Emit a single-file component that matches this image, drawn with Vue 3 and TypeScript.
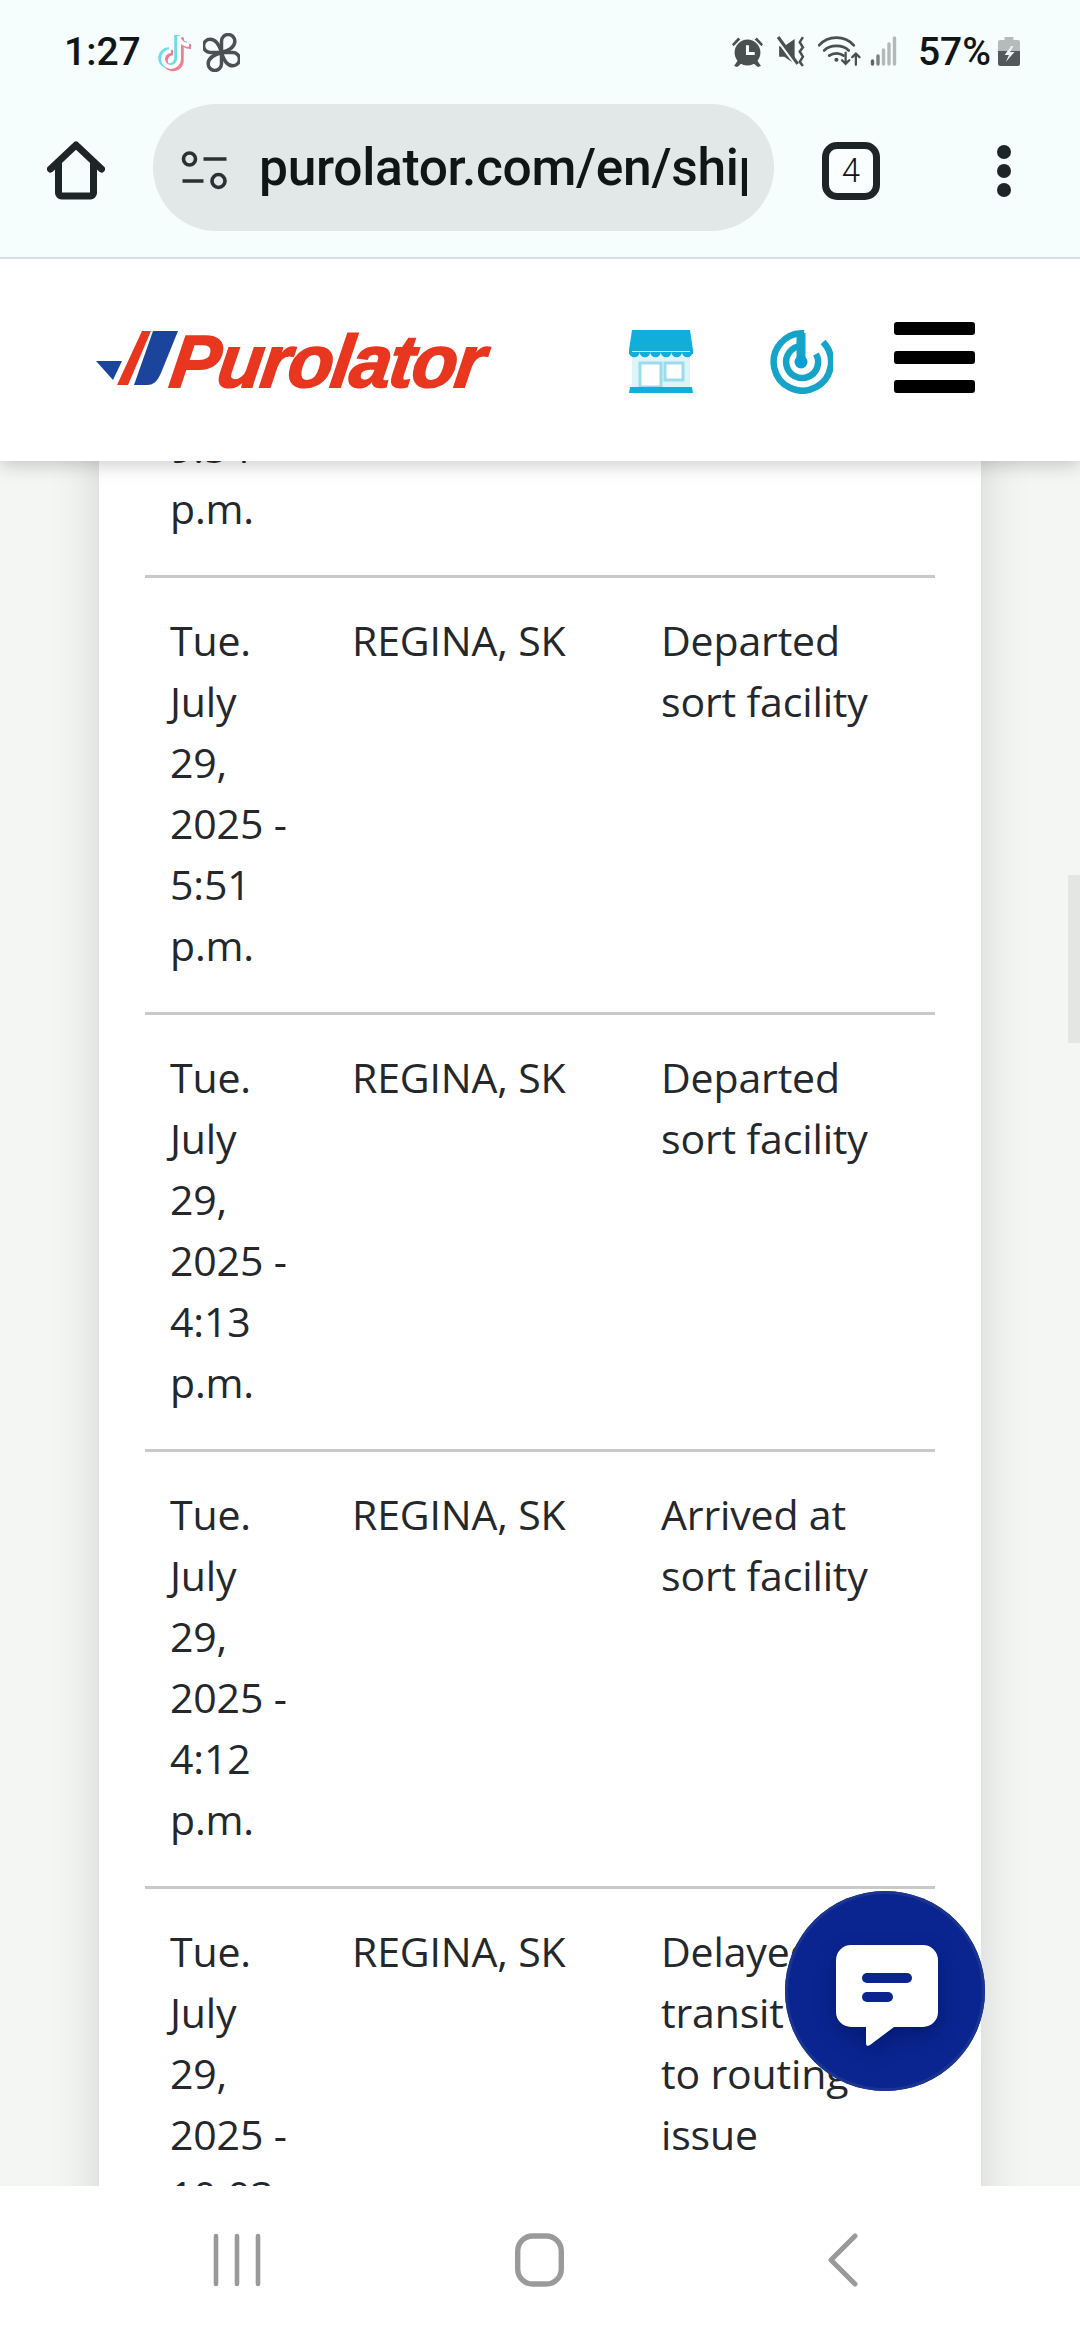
<script setup lang="ts">
interface Scan {
  date: string
  place: string
  status: string
}

const scans: Scan[] = [
  { date: 'Tue. July 29, 2025 - 9:54 p.m.', place: 'REGINA, SK', status: 'Departed sort facility' },
  { date: 'Tue. July 29, 2025 - 5:51 p.m.', place: 'REGINA, SK', status: 'Departed sort facility' },
  { date: 'Tue. July 29, 2025 - 4:13 p.m.', place: 'REGINA, SK', status: 'Departed sort facility' },
  { date: 'Tue. July 29, 2025 - 4:12 p.m.', place: 'REGINA, SK', status: 'Arrived at sort facility' },
  { date: 'Tue. July 29, 2025 - 10:03 a.m.', place: 'REGINA, SK', status: 'Delayed in transit due to routing issue' }
]
</script>

<template>
  <div class="phone">
    <header class="chrome">
      <div class="status">
        <span class="clock">1:27</span>
        <svg class="ic-tiktok" viewBox="0 0 35 40" width="35" height="40" fill="none" stroke-width="5.500">
          <g stroke="#6fdde6" transform="translate(-2 -1)">
            <path d="M21 4V27a8 8 0 1 1-8-8" />
            <path d="M21 4c0 5 4 9 10 9" stroke-width="5" />
          </g>
          <g stroke="#ea7f95" transform="translate(2 1.500)">
            <path d="M21 4V27a8 8 0 1 1-8-8" />
            <path d="M21 4c0 5 4 9 10 9" stroke-width="5" />
          </g>
          <g stroke="#fbfdfd">
            <path d="M21 4V27a8 8 0 1 1-8-8" stroke-width="4" />
            <path d="M21 4c0 5 4 9 10 9" stroke-width="3.500" />
          </g>
        </svg>
        <svg class="ic-pin" viewBox="0 0 36 38" width="37" height="39" fill="none" stroke="#4a5152" stroke-width="3.400" stroke-linejoin="round">
          <g v-for="a in [0, 90, 180, 270]" :key="a" :transform="`rotate(${a} 18 19)`">
            <path d="M18 19V8a6.500 6.500 0 0 1 13 0c0 6-6 9-13 11Z" />
          </g>
        </svg>
        <span class="spacer"></span>
        <svg class="ic-alarm" viewBox="0 0 30 30" width="31" height="31">
          <circle cx="15" cy="16" r="12.500" fill="#4a4f50" />
          <path d="M0 8l6-6.500 2 2-6.500 6.500ZM30 8l-6-6.500-2 2 6.500 6.500ZM6 23l-4 6 3 1 5-4ZM24 23l4 6-3 1-5-4Z" fill="#4a4f50" />
          <path d="M15 9v8h7" fill="none" stroke="#fbffff" stroke-width="3" />
        </svg>
        <svg class="ic-mute" viewBox="1 0 27 30" width="30" height="31">
          <path d="M3 10h5L18 3v24L8 20H3Z" fill="#4a4f50" />
          <path d="M1 2l19 26" stroke="#f5fdfd" stroke-width="4" />
          <path d="M2 1l19 26" stroke="#4a4f50" stroke-width="3" />
          <path d="M26 1l-3 5 3 5-3 4 3 5-3 5 3 4" fill="none" stroke="#4a4f50" stroke-width="2.400" />
        </svg>
        <svg class="ic-wifi" viewBox="0 0 42 32" width="43" height="33" fill="none" stroke="#4a4f50" stroke-width="2.600" stroke-linecap="round">
          <path d="M1 11c9-10 25-10 34 0" />
          <path d="M6 16c6-6 18-6 24 0" />
          <path d="M11 21c4-3 10-3 14 0" />
          <circle cx="18" cy="25" r="2" fill="#4a4f50" stroke="none" />
          <path d="M27 18v11m-3.500-3.500 3.500 3.500 3.500-3.500M37 30V19m-3.500 3.500 3.500-3.500 3.500 3.500" stroke-width="2.200" />
        </svg>
        <svg class="ic-signal" viewBox="0 0 26 30" width="27" height="30" stroke-width="3.400" stroke-linecap="round">
          <path d="M2 28v-3" stroke="#5e6364" />
          <path d="M7.500 28v-8" stroke="#7c8182" />
          <path d="M13 28V14M18.500 28V8M24 28V2" stroke="#b4b8b8" />
        </svg>
        <span class="pct">57%</span>
        <svg class="ic-batt" viewBox="0 0 20 29" width="22" height="29" preserveAspectRatio="none">
          <path d="M6 0h8v3h4a2 2 0 0 1 2 2v9H0V5a2 2 0 0 1 2-2h4Z" fill="#b6baba" />
          <path d="M0 14h20v13a2 2 0 0 1-2 2H2a2 2 0 0 1-2-2Z" fill="#53585a" />
          <path d="M12 9l-6 9h4l-3 7 8-10h-4l3-6Z" fill="#eef3f3" />
        </svg>
      </div>
      <div class="urlrow">
        <svg class="ic-home" viewBox="0 0 58 59" width="58" height="59" fill="none" stroke="#1e2526" stroke-width="7" stroke-linecap="round" stroke-linejoin="round">
          <path d="M3.500 28 29 4l25.500 24" />
          <path d="M11.500 22v30a3 3 0 0 0 3 3h29a3 3 0 0 0 3-3V22" />
        </svg>
        <div class="pill">
          <svg class="ic-tune" viewBox="0 0 46 40" width="47" height="40" fill="none" stroke="#2a3132" stroke-width="3.600">
            <circle cx="8" cy="8" r="6" />
            <path d="M22 8h23M1 30h21" />
            <circle cx="37" cy="30" r="6.500" />
          </svg>
          <span class="url">purolator.com/en/ship</span>
        </div>
        <div class="tabs">4</div>
        <div class="dots"><i></i><i></i><i></i></div>
      </div>
    </header>

    <div class="site">
      <svg class="logo-mark" viewBox="0 0 82 54" width="82" height="54">
        <path d="M0 30h26l-9 19Z" fill="#1b459c" />
        <path d="M46 0h9L32 54H21Z" fill="#e8361f" />
        <path d="M57 0h25L65 42c-4 9-8 12-14 12H38Z" fill="#1b459c" />
      </svg>
      <span class="logo-word">Purolator</span>
      <svg class="ic-store" viewBox="0 0 64 63" width="64" height="63">
        <path d="M3 0h58l3 20v4H0v-4Z" fill="#12aedb" />
        <path d="M3 21h58v36H3Z" fill="#dff4fa" />
        <path d="M0 22a5.300 5.300 0 0 0 10.600 0 5.300 5.300 0 0 0 10.600 0 5.300 5.300 0 0 0 10.600 0 5.300 5.300 0 0 0 10.600 0 5.300 5.300 0 0 0 10.600 0 5.300 5.300 0 0 0 10.600 0Z" fill="#12aedb" />
        <path d="M11 33h21v24H11ZM36 33h18v17H36Z" fill="#fff" stroke="#9adcee" stroke-width="3" />
        <path d="M1 57h62l1 6H0Z" fill="#12aedb" />
      </svg>
      <svg class="ic-radar" viewBox="0 0 64 64" width="64" height="64" fill="none" stroke="#15a3c7" stroke-width="6.500">
        <path d="M35 3.300A28.700 28.700 0 1 0 54 12" />
        <path d="M32 16A16 16 0 1 0 47 24" />
        <path d="M32 3V32" stroke-width="9" />
        <circle cx="32" cy="32" r="6.500" fill="#0b9fd8" stroke="none" />
      </svg>
      <div class="burger"><i></i><i></i><i></i></div>
    </div>

    <main class="page">
      <section class="card">
        <div v-for="(s, i) in scans" :key="i" class="row">
          <div class="cell date">{{ s.date }}</div>
          <div class="cell place">{{ s.place }}</div>
          <div class="cell state">{{ s.status }}</div>
        </div>
      </section>
    </main>

    <nav class="navbar">
      <svg class="nav-recent" viewBox="0 0 48 54" width="48" height="54" stroke="#9a9a9a" stroke-width="4.600" stroke-linecap="round">
        <path d="M3 3v48M24 3v48M45 3v48" />
      </svg>
      <svg class="nav-home" viewBox="0 0 49 54" width="49" height="54" fill="none" stroke="#9a9a9a" stroke-width="5.400">
        <rect x="2.700" y="3" width="43.600" height="48" rx="15" />
      </svg>
      <svg class="nav-back" viewBox="0 0 30 54" width="30" height="54" fill="none" stroke="#9a9a9a" stroke-width="5" stroke-linecap="round" stroke-linejoin="round">
        <path d="M27 3 3 27l24 24" />
      </svg>
    </nav>

    <div class="thumb"></div>

    <button class="fab" type="button" aria-label="Chat">
      <svg viewBox="0 0 200 200" width="200" height="200">
        <path class="bubble" d="M66 54h72a15 15 0 0 1 15 15v52a15 15 0 0 1-15 15h-29l-24 18c-2 1.500-4 1-4-2v-16H66a15 15 0 0 1-15-15V69a15 15 0 0 1 15-15Z" fill="#fff" />
        <rect x="77" y="82" width="50" height="10" rx="5" fill="#0a2590" />
        <rect x="77" y="101" width="31" height="10" rx="5" fill="#0a2590" />
      </svg>
    </button>
  </div>
</template>

<style scoped>
.phone {
  position: relative;
  width: 1080px;
  height: 2340px;
  overflow: hidden;
  display: flex;
  flex-direction: column;
  background: #f4f6f4;
  font-family: "Open Sans", "Liberation Sans", sans-serif;
}
.chrome {
  flex: none;
  height: 259px;
  box-sizing: border-box;
  background: #f5fdfd;
  border-bottom: 2px solid #d8e1e2;
  position: relative;
  z-index: 4;
}
.status {
  height: 104px;
  box-sizing: border-box;
  padding: 28px 60px 0 64px;
  display: flex;
  align-items: flex-start;
}
.clock,
.pct {
  font-family: Roboto, "Liberation Sans", sans-serif;
  font-size: 39px;
  font-weight: 500;
  line-height: 48px;
  color: #111516;
}
.ic-tiktok { margin: 4px 0 0 17px; flex: none; }
.ic-pin { margin: 5px 0 0 10px; flex: none; }
.spacer { flex: 1; }
.ic-alarm { margin: 8px 0 0 0; flex: none; }
.ic-mute { margin: 8px 0 0 13px; flex: none; }
.ic-wifi { margin: 6px 0 0 12px; flex: none; }
.ic-signal { margin: 8px 0 0 9px; flex: none; }
.pct { margin-left: 21px; }
.ic-batt { margin: 9px 0 0 7px; flex: none; }

.urlrow {
  height: 127px;
  display: flex;
  align-items: center;
}
.ic-home { margin: 6px 0 0 47px; flex: none; }
.pill {
  margin-left: 48px;
  flex: none;
  width: 621px;
  height: 127px;
  box-sizing: border-box;
  padding: 0 27px 0 28px;
  border-radius: 64px;
  background: #e1e8e7;
  display: flex;
  align-items: center;
  gap: 31px;
}
.ic-tune { flex: none; margin-top: 6px; }
.url {
  flex: 1;
  min-width: 0;
  overflow: hidden;
  white-space: nowrap;
  font-family: Roboto, "Liberation Sans", sans-serif;
  font-size: 51.500px;
  line-height: 70px;
  font-weight: 500;
  color: #111516;
  letter-spacing: -0.3px;
}
.tabs {
  margin: 6px 0 0 48px;
  flex: none;
  width: 58px;
  height: 58px;
  box-sizing: border-box;
  border: 7px solid #1e2526;
  border-radius: 15px;
  background: #fbfefe;
  display: flex;
  align-items: center;
  justify-content: center;
  font-family: Roboto, "Liberation Sans", sans-serif;
  font-size: 33px;
  font-weight: 300;
  color: #111516;
}
.dots {
  margin: 6px 0 0 117px;
  display: flex;
  flex-direction: column;
  gap: 5px;
}
.dots i {
  width: 14px;
  height: 14px;
  border-radius: 50%;
  background: #1e2526;
}

.site {
  flex: none;
  height: 202px;
  box-sizing: border-box;
  background: #fff;
  padding: 71px 0 0 96px;
  display: flex;
  align-items: flex-start;
  position: relative;
  z-index: 3;
  box-shadow: 0 3px 18px rgba(0, 0, 0, 0.22);
}
.logo-mark { margin-top: 1px; flex: none; }
.logo-word {
  flex: none;
  margin: -11px 0 0 -10px;
  width: 330px;
  font-family: "Liberation Sans", Arial, sans-serif;
  font-size: 74px;
  font-weight: 700;
  font-style: italic;
  line-height: 85px;
  letter-spacing: -1.900px;
  color: #e8361f;
  -webkit-text-stroke: 1.800px #e8361f;
  white-space: nowrap;
  transform: skewX(-8deg);
  transform-origin: 0 78%;
}
.ic-store { margin-left: 131px; flex: none; }
.ic-radar { margin: 0 0 0 76px; flex: none; }
.burger {
  margin: -8px 0 0 61px;
  display: flex;
  flex-direction: column;
  gap: 16px;
}
.burger i {
  width: 81px;
  height: 13px;
  border-radius: 3px;
  background: #000;
}

.page {
  flex: 1;
  min-height: 0;
  overflow: hidden;
}
.card {
  margin: -320px 0 0 99px;
  width: 882px;
  box-sizing: border-box;
  padding: 0 46px;
  background: #fff;
  box-shadow: 0 0 46px rgba(0, 0, 0, 0.14);
}
.row {
  display: grid;
  grid-template-columns: 182px 309px 299px;
  padding: 32px 0 36px;
  border-bottom: 3px solid #c9c9c9;
}
.cell {
  padding: 0 25px;
  font-size: 41px;
  line-height: 61px;
  letter-spacing: -0.15px;
  color: #24282c;
}
.date { padding-right: 30px; }

.navbar {
  flex: none;
  height: 154px;
  box-sizing: border-box;
  background: #fff;
  padding: 0 0 6px 213px;
  display: flex;
  align-items: center;
  position: relative;
  z-index: 3;
}
.nav-home { margin-left: 254px; }
.nav-back { margin-left: 264px; }

.thumb {
  position: absolute;
  left: 1068px;
  top: 875px;
  width: 12px;
  height: 168px;
  background: #e4e6e4;
  z-index: 2;
}
.fab {
  position: absolute;
  left: 785px;
  top: 1891px;
  width: 200px;
  height: 200px;
  padding: 0;
  box-sizing: border-box;
  border: 0;
  border-radius: 50%;
  background: #0a2590;
  box-shadow: inset 0 0 0 3px #1a3490;
  z-index: 5;
}
.fab svg { display: block; }
.bubble { filter: drop-shadow(0 8px 10px rgba(0, 10, 80, 0.45)); }
</style>
